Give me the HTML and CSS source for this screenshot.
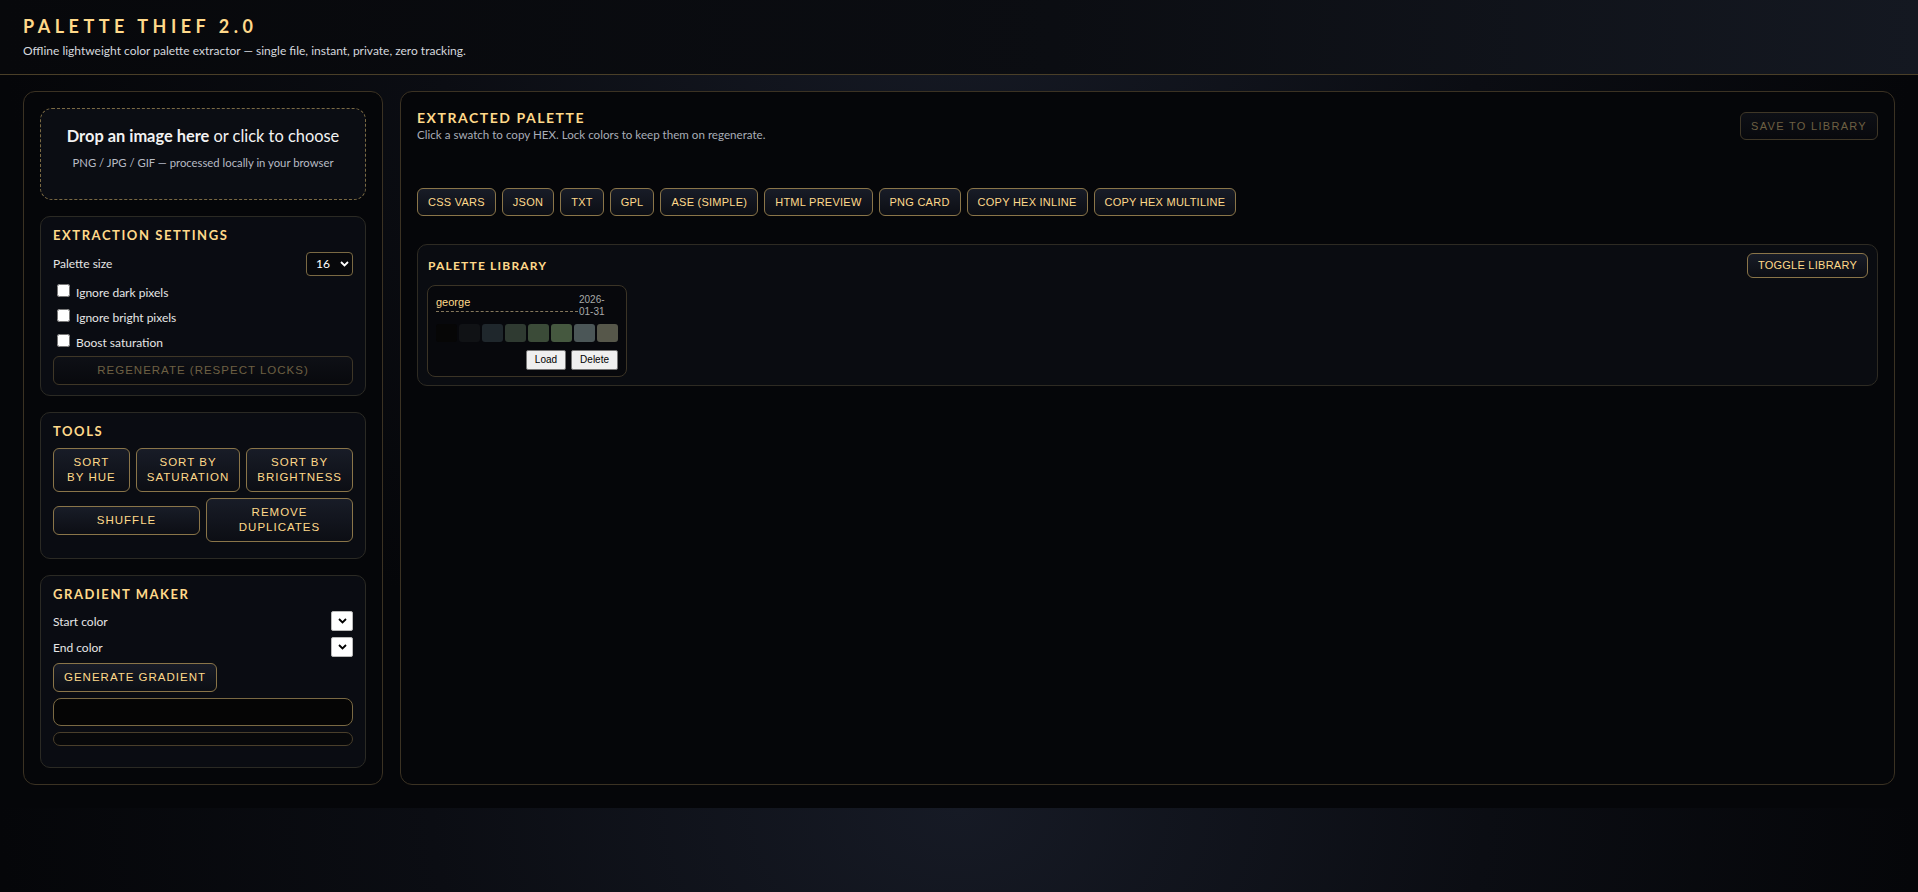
FILE: index.html
```html
<!DOCTYPE html>
<html lang="en">
<head>
<meta charset="utf-8">
<title>Palette Thief 2.0</title>
<link rel="stylesheet" href="styles.css">
</head>
<body>
<header class="top">
  <h1 class="brand">PALETTE THIEF 2.0</h1>
  <p class="tagline">Offline lightweight color palette extractor — single file, instant, private, zero tracking.</p>
</header>
<main class="layout">
  <aside class="panel sidebar">
    <div class="dropzone">
      <p class="drop-main"><strong>Drop an image here</strong> or click to choose</p>
      <p class="drop-sub">PNG / JPG / GIF — processed locally in your browser</p>
    </div>

    <section class="card card-settings">
      <h2 class="card-title">EXTRACTION SETTINGS</h2>
      <div class="field-row">
        <span>Palette size</span>
        <div class="select"><span>16</span><svg width="9" height="6" viewBox="0 0 9 6"><path d="M1 1 L4.5 4.5 L8 1" fill="none" stroke="#fff" stroke-width="1.8"/></svg></div>
      </div>
      <label class="check"><input type="checkbox"><span>Ignore dark pixels</span></label>
      <label class="check"><input type="checkbox"><span>Ignore bright pixels</span></label>
      <label class="check"><input type="checkbox"><span>Boost saturation</span></label>
      <button class="btn btn-disabled" disabled>Regenerate (respect locks)</button>
    </section>

    <section class="card card-tools">
      <h2 class="card-title">TOOLS</h2>
      <div class="tools">
        <button class="btn">Sort by hue</button>
        <button class="btn">Sort by saturation</button>
        <button class="btn">Sort by brightness</button>
        <button class="btn">Shuffle</button>
        <button class="btn">Remove duplicates</button>
      </div>
    </section>

    <section class="card card-gradient">
      <h2 class="card-title">GRADIENT MAKER</h2>
      <div class="color-row">
        <span>Start color</span>
        <div class="color-pick"><svg width="9" height="6" viewBox="0 0 9 6"><path d="M1 1 L4.5 4.5 L8 1" fill="none" stroke="#000" stroke-width="1.8"/></svg></div>
      </div>
      <div class="color-row">
        <span>End color</span>
        <div class="color-pick"><svg width="9" height="6" viewBox="0 0 9 6"><path d="M1 1 L4.5 4.5 L8 1" fill="none" stroke="#000" stroke-width="1.8"/></svg></div>
      </div>
      <button class="btn btn-inline">Generate gradient</button>
      <div class="grad-preview"></div>
      <div class="grad-bar"></div>
    </section>
  </aside>

  <section class="panel workspace">
    <div class="ws-head">
      <div>
        <h2 class="ws-title">EXTRACTED PALETTE</h2>
        <p class="ws-sub">Click a swatch to copy HEX. Lock colors to keep them on regenerate.</p>
      </div>
      <button class="btn chip btn-disabled btn-save" disabled>Save to library</button>
    </div>
    <div class="swatches"></div>
    <div class="exports">
      <button class="btn chip">CSS vars</button>
      <button class="btn chip">JSON</button>
      <button class="btn chip">TXT</button>
      <button class="btn chip">GPL</button>
      <button class="btn chip">ASE (simple)</button>
      <button class="btn chip">HTML preview</button>
      <button class="btn chip">PNG card</button>
      <button class="btn chip">Copy HEX inline</button>
      <button class="btn chip">Copy HEX multiline</button>
    </div>

    <div class="library">
      <div class="lib-head">
        <h3 class="lib-title">PALETTE LIBRARY</h3>
        <button class="btn chip btn-toggle">Toggle library</button>
      </div>
      <div class="lib-grid">
        <div class="lib-item">
          <div class="item-head">
            <span class="item-name">george</span>
            <span class="item-date">2026-01-31</span>
          </div>
          <div class="item-swatches">
            <span class="sw" style="background:#060606"></span>
            <span class="sw" style="background:#101215"></span>
            <span class="sw" style="background:#1f272c"></span>
            <span class="sw" style="background:#2f3a31"></span>
            <span class="sw" style="background:#3b4b38"></span>
            <span class="sw" style="background:#45583f"></span>
            <span class="sw" style="background:#4b5657"></span>
            <span class="sw" style="background:#56574a"></span>
          </div>
          <div class="item-actions">
            <button class="mini-btn">Load</button>
            <button class="mini-btn">Delete</button>
          </div>
        </div>
      </div>
    </div>
  </section>
</main>
</body>
</html>
```
FILE: styles.css
```css
* { box-sizing: border-box; }

body {
  margin: 0;
  font-family: Lato, "Open Sans", sans-serif;
  color: #e6e6e6;
  background: radial-gradient(ellipse 50% 90% at 50% 0%, #161a25 0%, #0b0d13 55%, #050609 100%), #050609;
}

/* ---------- header ---------- */
.top {
  padding: 15px 23px 16px;
  border-bottom: 1px solid #4a3f28;
  background: linear-gradient(90deg, #07080b 0%, #0b0d12 55%, #141821 100%);
}
.brand {
  margin: 0;
  font: 700 18px/22px Lato, sans-serif;
  letter-spacing: 0.25em;
  color: #ffd98a;
}
.tagline {
  margin: 6px 0 0;
  font-size: 12px;
  line-height: 15px;
  color: #d5d8de;
}

/* ---------- layout ---------- */
.layout {
  display: grid;
  grid-template-columns: 360px 1fr;
  gap: 17px;
  padding: 16px 23px 23px;
}
.panel {
  border: 1px solid #3b3223;
  border-radius: 12px;
  background: #050609;
  padding: 16px;
}
.sidebar {
  display: flex;
  flex-direction: column;
  gap: 16px;
}

/* ---------- drop zone ---------- */
.dropzone {
  border: 1px dashed #7a6943;
  border-radius: 12px;
  background: #0b0d13;
  padding: 17px 16px 29px;
  text-align: center;
}
.drop-main {
  margin: 0;
  font-size: 16.4px;
  line-height: 20px;
  color: #f2f2f2;
}
.drop-main strong { font-weight: 700; }
.drop-sub {
  margin: 10px 0 0;
  font-size: 11.3px;
  line-height: 14px;
  color: #b7bbc4;
}

/* ---------- cards ---------- */
.card {
  border: 1px solid #2b2a24;
  border-radius: 10px;
  background: #0a0c12;
  padding: 10px 12px;
  display: flex;
  flex-direction: column;
  gap: 6px;
  font-size: 12px;
}
.card-tools { padding-bottom: 16px; }
.card-gradient { padding-bottom: 21px; }
.card-title {
  margin: 0 0 3px;
  font: 700 13px/16px Lato, sans-serif;
  letter-spacing: 0.12em;
  color: #ffd98a;
}

.field-row {
  display: flex;
  justify-content: space-between;
  align-items: center;
  height: 23px;
}
.select {
  width: 47px;
  height: 24px;
  border: 1px solid #7a6943;
  border-radius: 4px;
  background: #07080b;
  display: flex;
  align-items: center;
  gap: 10px;
  padding-left: 9px;
  color: #fff;
  font-size: 12px;
}

.check {
  display: flex;
  align-items: center;
  height: 19px;
}
.check input { margin: 3px 3px 3px 4px; width: 13px; height: 13px; }
.check span { margin-left: 3px; padding-top: 4px; }

/* ---------- buttons ---------- */
.btn {
  font: 11.5px/15px "Liberation Sans", Arial, sans-serif;
  letter-spacing: 1px;
  text-transform: uppercase;
  color: #ffd98a;
  background: linear-gradient(180deg, #181c27 0%, #0c0e14 100%);
  border: 1px solid #8a7549;
  border-radius: 6px;
  padding: 6px 10px;
  cursor: pointer;
}
.btn-disabled {
  color: #6e6043;
  border-color: #3f3727;
  background: linear-gradient(180deg, #0e1016 0%, #08090d 100%);
  cursor: default;
}
.btn-inline { align-self: flex-start; }

.tools {
  display: flex;
  flex-wrap: wrap;
  align-items: center;
  gap: 6px;
}
.tools .btn { flex: 1 1 0; }

/* ---------- gradient maker ---------- */
.color-row {
  display: flex;
  justify-content: space-between;
  align-items: center;
  height: 20px;
}
.color-pick {
  width: 22px;
  height: 20px;
  background: #fff;
  border: 1px solid #b9b9b9;
  border-radius: 2px;
  display: flex;
  align-items: center;
  justify-content: center;
}
.grad-preview {
  height: 28px;
  border: 1px solid #7a6943;
  border-radius: 8px;
  background: #050505;
}
.grad-bar {
  height: 14px;
  border: 1px solid #4a3f2b;
  border-radius: 7px;
  background: #07080a;
}

/* ---------- workspace ---------- */
.workspace {
  display: flex;
  flex-direction: column;
}
.ws-head {
  display: flex;
  justify-content: space-between;
  align-items: center;
  margin-top: 1px;
}
.ws-title {
  margin: 0;
  font: 700 14px/17px Lato, sans-serif;
  letter-spacing: 0.11em;
  color: #ffd98a;
}
.ws-sub {
  margin: 2px 0 0;
  font-size: 11.6px;
  line-height: 14px;
  color: #a9adb7;
}
.chip {
  font-size: 11px;
  letter-spacing: 0.25px;
  line-height: 14px;
}
.btn-save { letter-spacing: 1.3px; }
.swatches { height: 46px; }
.exports {
  display: flex;
  flex-wrap: wrap;
  gap: 6px;
}

/* ---------- library ---------- */
.library {
  margin-top: 28px;
  border: 1px solid #2e2b23;
  border-radius: 10px;
  background: #0a0c11;
  padding: 8px 9px 8px;
}
.lib-head {
  display: flex;
  justify-content: space-between;
  align-items: center;
}
.lib-title {
  margin: 0 0 0 1px;
  font: 700 12px/15px Lato, sans-serif;
  letter-spacing: 0.1em;
  color: #ffd98a;
}
.btn-toggle {
  padding: 5px 10px;
  line-height: 13px;
}
.lib-grid {
  display: flex;
  margin-top: 7px;
}
.lib-item {
  width: 200px;
  border: 1px solid #3b3426;
  border-radius: 8px;
  background: #07080c;
  padding: 8px 8px 6px;
}
.item-head {
  display: flex;
  align-items: flex-start;
  height: 24px;
}
.item-name {
  flex: 1;
  height: 18px;
  font: 11px/17px "Liberation Sans", Arial, sans-serif;
  color: #ffd98a;
  border-bottom: 1px dashed #85785c;
}
.item-date {
  width: 39px;
  margin-left: 1px;
  font: 10px/12px "Liberation Sans", Arial, sans-serif;
  color: #a8a8a8;
}
.item-swatches {
  display: flex;
  gap: 2px;
  height: 18px;
  margin-top: 6px;
}
.sw {
  flex: 1;
  border-radius: 3px;
}
.item-actions {
  display: flex;
  justify-content: flex-end;
  gap: 5px;
  margin-top: 8px;
}
.mini-btn {
  font: 10px/12px "Liberation Sans", Arial, sans-serif;
  color: #000;
  background: #efefef;
  border: 1px solid #767676;
  border-radius: 2px;
  padding: 3px 8px;
  cursor: pointer;
}
```
